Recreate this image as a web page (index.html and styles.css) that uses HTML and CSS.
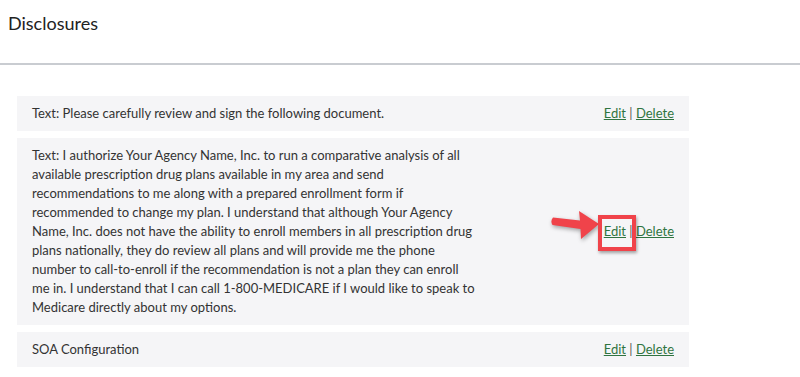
FILE: index.html
```html
<!DOCTYPE html>
<html>
    <head>
        <meta charset="UTF-8">
        <meta name="viewport" content="width=device-width, initial-scale=1.0">
        <title>Disclosures</title>
        <link rel="stylesheet" href="styles.css">
    </head>

    <body>
        <header class="page-header">
            <h1 class="page-title">Disclosures</h1>
        </header>

        <div class="disclosure-list">
            <div class="disclosure-row">
                <p class="disclosure-text">Text: Please carefully review and sign the following document.</p>
                <div class="actions">
                    <a href="#">Edit</a> <span class="sep">|</span> <a href="#">Delete</a>
                </div>
            </div>

            <div class="disclosure-row">
                <p class="disclosure-text">Text: I authorize Your Agency Name, Inc. to run a comparative analysis of all available prescription drug plans available in my area and send recommendations to me along with a prepared enrollment form if recommended to change my plan. I understand that although Your Agency Name, Inc. does not have the ability to enroll members in all prescription drug plans nationally, they do review all plans and will provide me the phone number to call-to-enroll if the recommendation is not a plan they can enroll me in. I understand that I can call 1-800-MEDICARE if I would like to speak to Medicare directly about my options.</p>
                <div class="actions">
                    <span class="highlight">
                        <svg class="arrow" width="52" height="32" viewBox="0 0 52 32">
                            <path d="M3 7.5 L30 10.5 L29 1 L49 14 L31 29 L30.5 19 L2.5 15 Q0 11 3 7.5 Z" fill="#f0434a"/>
                        </svg>
                        <a href="#">Edit</a>
                        <span class="box"></span>
                    </span>
                    <span class="sep">|</span> <a href="#">Delete</a>
                </div>
            </div>

            <div class="disclosure-row">
                <p class="disclosure-text">SOA Configuration</p>
                <div class="actions">
                    <a href="#">Edit</a> <span class="sep">|</span> <a href="#">Delete</a>
                </div>
            </div>
        </div>
    </body>
</html>
```

FILE: styles.css
```css
* {
    box-sizing: border-box;
}
body {
    margin: 0;
    font-family: Lato, "Noto Sans", sans-serif;
    color: #333;
    background-color: white;
}
.page-header {
    height: 65px;
    padding: 11px 8px;
    border-bottom: 2px solid #c9ccd1;
}
.page-title {
    margin: 0;
    font-size: 18px;
    font-weight: normal;
    color: #222;
    line-height: 24px;
}
.disclosure-list {
    width: 689px;
    padding: 31px 0 0 17px;
    display: flex;
    flex-direction: column;
    gap: 7px;
}
.disclosure-row {
    display: flex;
    justify-content: space-between;
    align-items: center;
    background-color: #f5f5f7;
    padding: 8px 15px;
}
.disclosure-text {
    margin: 0;
    width: 444px;
    font-size: 13px;
    line-height: 19px;
}
.actions {
    font-size: 13px;
    line-height: 19px;
    white-space: nowrap;
    color: #555;
}
.actions a {
    color: #2f7440;
    text-decoration: underline;
}
.highlight {
    position: relative;
}
.box {
    position: absolute;
    left: -6px;
    top: -8px;
    width: 38px;
    height: 36px;
    border: 4px solid #f0434a;
    box-shadow: 1px 2px 3px rgba(0, 0, 0, 0.35);
}
.arrow {
    position: absolute;
    left: -54px;
    top: -13px;
    filter: drop-shadow(1px 2px 2px rgba(0, 0, 0, 0.35));
}
```
